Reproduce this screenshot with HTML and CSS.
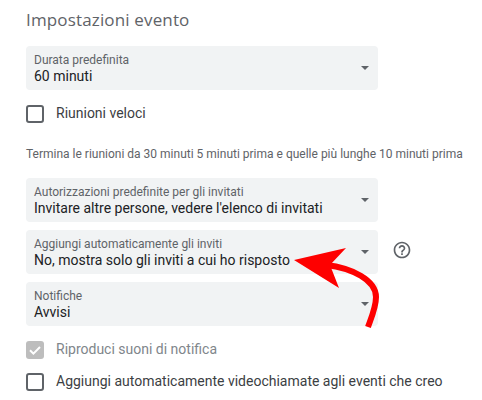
FILE: index.html
```html
<!DOCTYPE html>
<html lang="it">
<head>
    <meta charset="UTF-8">
    <meta name="viewport" content="width=device-width, initial-scale=1.0">
    <title>Impostazioni evento</title>
    <link rel="stylesheet" href="styles.css">
</head>
<body>
    <div class="settings">
        <h2 class="title">Impostazioni evento</h2>

        <div class="select select-first">
            <div class="select-text">
                <div class="select-label">Durata predefinita</div>
                <div class="select-value">60 minuti</div>
            </div>
            <span class="caret"></span>
        </div>

        <div class="check check-quick">
            <span class="box"></span>
            <span class="check-label">Riunioni veloci</span>
        </div>

        <p class="hint">Termina le riunioni da 30 minuti 5 minuti prima e quelle più lunghe 10 minuti prima</p>

        <div class="select">
            <div class="select-text">
                <div class="select-label">Autorizzazioni predefinite per gli invitati</div>
                <div class="select-value">Invitare altre persone, vedere l'elenco di invitati</div>
            </div>
            <span class="caret"></span>
        </div>

        <div class="select-row">
            <div class="select">
                <div class="select-text">
                    <div class="select-label">Aggiungi automaticamente gli inviti</div>
                    <div class="select-value">No, mostra solo gli inviti a cui ho risposto</div>
                </div>
                <span class="caret"></span>
            </div>
            <svg class="help" viewBox="0 0 24 24" width="20" height="20">
                <path fill="#5f6368" d="M11 18h2v-2h-2v2zm1-16C6.48 2 2 6.48 2 12s4.48 10 10 10 10-4.48 10-10S17.52 2 12 2zm0 18c-4.41 0-8-3.59-8-8s3.59-8 8-8 8 3.59 8 8-3.59 8-8 8zm0-14c-2.21 0-4 1.79-4 4h2c0-1.1.9-2 2-2s2 .9 2 2c0 2-3 1.75-3 5h2c0-2.25 3-2.5 3-5 0-2.21-1.79-4-4-4z"/>
            </svg>
        </div>

        <div class="select">
            <div class="select-text">
                <div class="select-label">Notifiche</div>
                <div class="select-value">Avvisi</div>
            </div>
            <span class="caret"></span>
        </div>

        <div class="check check-sound">
            <span class="box box-disabled">
                <svg viewBox="0 0 18 18" width="18" height="18">
                    <path fill="none" stroke="#fff" stroke-width="2" d="M4 9.2l3.4 3.4L14 6"/>
                </svg>
            </span>
            <span class="check-label check-label-disabled">Riproduci suoni di notifica</span>
        </div>

        <div class="check check-video">
            <span class="box"></span>
            <span class="check-label">Aggiungi automaticamente videochiamate agli eventi che creo</span>
        </div>
    </div>

    <!-- freccia rossa sopra lo screenshot -->
    <svg class="arrow" viewBox="0 0 482 400" width="482" height="400">
        <path fill="none" stroke="#fe0000" stroke-width="6" d="M326 265C352 268 376 280 376 297C376 307 372 316 368 327"/>
        <path fill="#fe0000" d="M294 260L346 248L330 265L339 288Z"/>
    </svg>
</body>
</html>
```

FILE: styles.css
```css
html, body { margin: 0; padding: 0; height: 400px; overflow: hidden; background-color: #fff; }
body { font-family: Roboto, "Liberation Sans", sans-serif; color: #3c4043; position: relative; }
.settings { padding: 8px 0 0 26px; }
.title { margin: 0; font-family: "Open Sans", Roboto, sans-serif; font-size: 17px; font-weight: 400; line-height: 24px; color: #5f6368; letter-spacing: 0.15px; }
.select { width: 352px; height: 44px; box-sizing: border-box; padding: 7px 9px 0 8px; margin-bottom: 8px; background-color: #f1f3f4; border-radius: 4px; display: flex; justify-content: space-between; align-items: center; }
.select-first { margin-top: 14px; margin-bottom: 0; }
.select-text { align-self: flex-start; }
.select-label { font-size: 12px; line-height: 14px; color: #5f6368; }
.select-value { font-size: 14px; line-height: 18px; color: #202124; }
.caret { width: 0; height: 0; border-left: 4px solid transparent; border-right: 4px solid transparent; border-top: 4px solid #5f6368; margin-top: -7px; }
.select-row { display: flex; align-items: flex-start; }
.help { margin: 10px 0 0 14px; }
.check { display: flex; align-items: flex-start; height: 18px; }
.check-quick { margin-top: 15px; }
.check-sound { margin-top: 15px; }
.check-video { margin-top: 14px; }
.box { width: 18px; height: 18px; box-sizing: border-box; border: 2px solid #5f6368; border-radius: 3px; margin-right: 12px; flex: none; }
.box-disabled { border: none; background-color: #bdbdbd; }
.box-disabled svg { display: block; }
.check-label { font-size: 14px; line-height: 16px; }
.check-label-disabled { color: #80868b; }
.hint { margin: 23px 0 16px; font-size: 12px; line-height: 16px; color: #5f6368; white-space: nowrap; }
.arrow { position: absolute; left: 0; top: 0; }
```
